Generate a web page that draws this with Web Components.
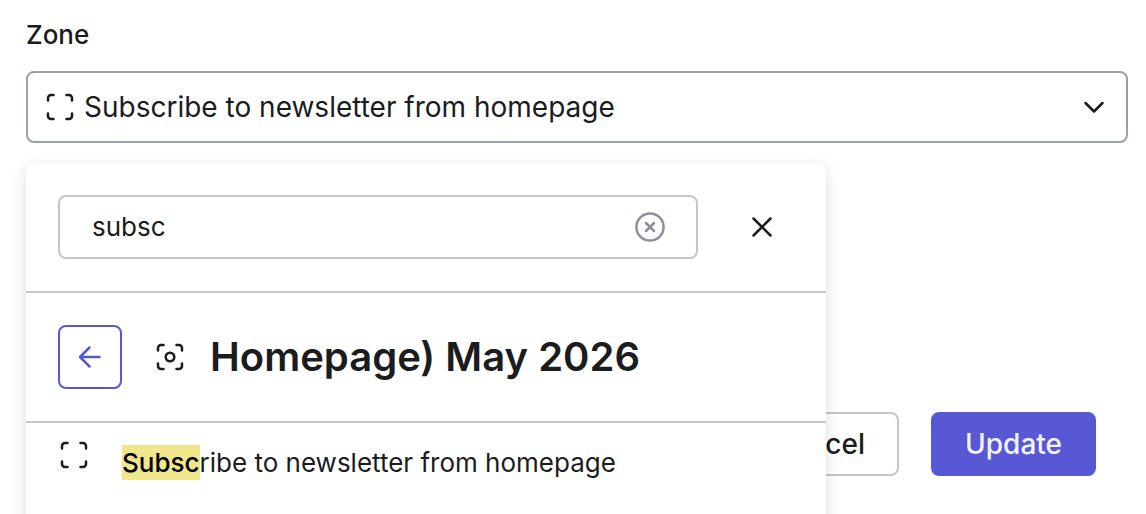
<!DOCTYPE html>
<html lang="en">
<head>
<meta charset="utf-8">
<meta name="viewport" content="width=device-width, initial-scale=1">
<title>Zone</title>
<style>
  html { --ink: #1b1c1e; --accent: #5858d5; --line: #c3c6cd; --line-strong: #9a9fab; --muted: #8a909c; --compact: 26px; }
  body { margin: 0; background: #fff; color: var(--ink); font: 400 28px/40px Inter, "Liberation Sans", sans-serif; }
</style>
</head>
<body>
<zone-form>
  <zone-select label="Zone" value="Subscribe to newsletter from homepage">
    <zone-panel>
      <zone-search slot="search" value="subsc"></zone-search>
      <zone-crumb slot="crumb">Homepage) May 2026</zone-crumb>
      <zone-option match="Subsc">ribe to newsletter from homepage</zone-option>
    </zone-panel>
  </zone-select>
  <action-button slot="actions">Cancel</action-button>
  <action-button slot="actions" primary>Update</action-button>
</zone-form>

<script>
const define = (name, html, setup) => {
  const template = document.createElement('template');
  template.innerHTML = html;
  customElements.define(name, class extends HTMLElement {
    constructor() {
      super();
      this.attachShadow({ mode: 'open' }).append(template.content.cloneNode(true));
    }
    connectedCallback() {
      if (setup) setup(this, this.shadowRoot);
    }
  });
};

const corners = '<path d="M4 9.500V7a3 3 0 0 1 3-3h2.500M22.500 4H25a3 3 0 0 1 3 3v2.500M28 22.500V25a3 3 0 0 1-3 3h-2.500M9.500 28H7a3 3 0 0 1-3-3v-2.500"/>';
const icons = {
  zone: corners,
  page: corners + '<circle cx="16" cy="16" r="4.300"/>',
  chevron: '<path d="M7.500 12 16 20.500 24.500 12"/>',
  close: '<path d="m7.500 7.500 17 17m0-17-17 17"/>',
  clear: '<circle cx="16" cy="16" r="13.600"/><path d="m12 12 8 8m0-8-8 8"/>',
  back: '<path d="M25.500 16H6M15.500 6.500 6 16l9.500 9.500"/>'
};
define('ui-icon', `
  <style>
    :host { display: block; flex: none; width: 32px; height: 32px; }
    svg { display: block; width: 100%; height: 100%; fill: none; stroke: currentColor; stroke-width: 2.5; stroke-linecap: round; stroke-linejoin: round; }
  </style>
  <svg viewBox="0 0 32 32" aria-hidden="true"></svg>`,
  (host, root) => { root.querySelector('svg').innerHTML = icons[host.getAttribute('name')]; });

define('action-button', `
  <style>
    :host { display: block; }
    button { box-sizing: border-box; height: 64px; padding: 0 32px; border: 2px solid var(--line); border-radius: 8px; background: #fff; color: var(--ink); font: inherit; font-weight: 500; }
    :host([primary]) button { border-color: var(--accent); background: var(--accent); color: #f3f3ff; }
  </style>
  <button type="button"><slot></slot></button>`);

define('zone-option', `
  <style>
    :host { display: flex; align-items: flex-start; gap: 32px; padding: 16px 32px; }
    a { color: inherit; text-decoration: none; font-size: var(--compact); line-height: 48px; }
    mark { padding: 2px 0; background: khaki; color: #000; font-weight: 500; }
  </style>
  <ui-icon name="zone"></ui-icon>
  <a href="#"><mark></mark><slot></slot></a>`,
  (host, root) => { root.querySelector('mark').textContent = host.getAttribute('match'); });

define('zone-crumb', `
  <style>
    :host { display: flex; align-items: center; gap: 32px; padding: 32px; border-bottom: 2px solid var(--line); }
    button { box-sizing: border-box; display: grid; place-items: center; width: 64px; height: 64px; padding: 0; border: 2px solid var(--accent); border-radius: 8px; background: #fff; color: var(--accent); }
    h2 { margin: 0; font-size: 40px; line-height: 48px; font-weight: 600; }
    .title { display: flex; align-items: center; gap: 24px; }
  </style>
  <button type="button" aria-label="Back"><ui-icon name="back"></ui-icon></button>
  <div class="title"><ui-icon name="page"></ui-icon><h2><slot></slot></h2></div>`);

define('zone-search', `
  <style>
    :host { display: flex; gap: 32px; padding: 32px; border-bottom: 2px solid var(--line); }
    .box { box-sizing: border-box; flex: 1; min-width: 0; display: flex; align-items: center; height: 64px; padding: 0 30px 0 32px; border: 2px solid var(--line); border-radius: 8px; }
    input { flex: 1; min-width: 0; padding: 0; border: 0; outline: 0; background: none; color: inherit; font: inherit; font-size: var(--compact); }
    button { display: grid; place-items: center; padding: 0; border: 0; background: none; color: inherit; }
    .clear { color: var(--muted); }
    .close { width: 64px; height: 64px; }
  </style>
  <div class="box">
    <input type="text" aria-label="Search zones">
    <button class="clear" type="button" aria-label="Clear"><ui-icon name="clear"></ui-icon></button>
  </div>
  <button class="close" type="button" aria-label="Close"><ui-icon name="close"></ui-icon></button>`,
  (host, root) => { root.querySelector('input').value = host.getAttribute('value'); });

define('zone-panel', `
  <style>
    :host { display: block; box-sizing: border-box; width: 800px; max-width: 100%; padding-bottom: 96px; border-radius: 8px; background: #fff; box-shadow: 0 4px 16px rgba(0, 0, 0, .13); }
  </style>
  <slot name="search"></slot>
  <slot name="crumb"></slot>
  <slot></slot>`);

define('zone-select', `
  <style>
    :host { display: block; position: relative; }
    label { display: block; margin-bottom: 16px; font-size: var(--compact); font-weight: 500; }
    .field { display: grid; align-items: center; }
    .field > * { grid-area: 1 / 1; }
    select { appearance: none; box-sizing: border-box; width: 100%; height: 72px; padding: 0 64px 0 56px; border: 2px solid var(--line-strong); border-radius: 8px; background: #fff; color: inherit; font: inherit; }
    ui-icon { margin: 0 18px; pointer-events: none; z-index: 1; }
    .arrow { justify-self: end; }
    .drop { position: absolute; top: 100%; left: 0; right: 0; margin-top: 20px; z-index: 2; }
  </style>
  <label for="zone"></label>
  <div class="field">
    <select id="zone"><option></option></select>
    <ui-icon name="zone"></ui-icon>
    <ui-icon class="arrow" name="chevron"></ui-icon>
  </div>
  <div class="drop"><slot></slot></div>`,
  (host, root) => {
    root.querySelector('label').textContent = host.getAttribute('label');
    root.querySelector('option').textContent = host.getAttribute('value');
  });

define('zone-form', `
  <style>
    :host { display: block; overflow: hidden; }
    form { box-sizing: border-box; min-height: 100vh; display: flex; flex-direction: column; justify-content: space-between; padding: 15px 18px 38px 26px; }
    footer { display: flex; justify-content: flex-end; gap: 32px; padding-right: 32px; }
  </style>
  <form>
    <slot></slot>
    <footer><slot name="actions"></slot></footer>
  </form>`);
</script>
</body>
</html>
